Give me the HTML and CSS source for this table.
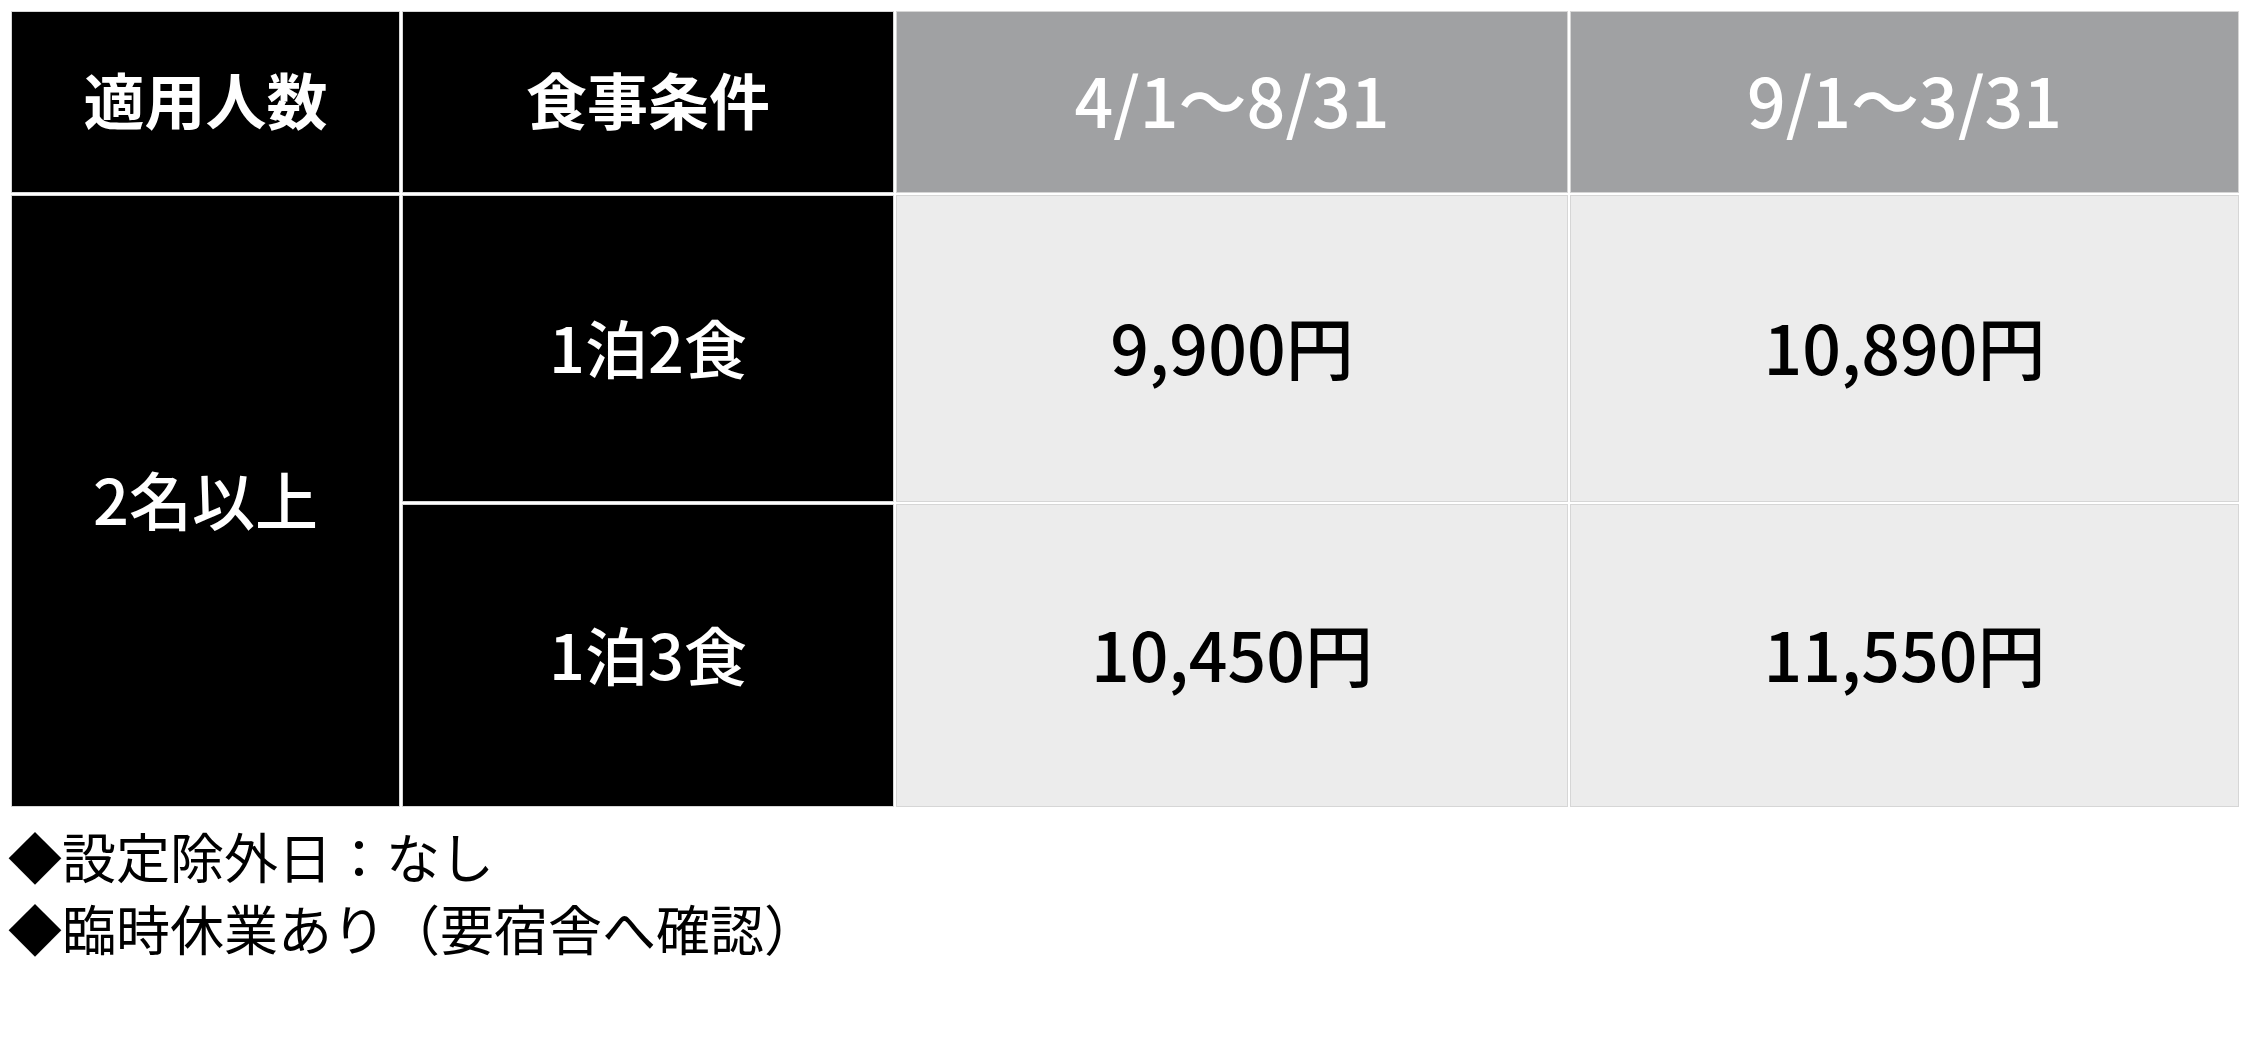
FILE: index.html
```html
<!DOCTYPE html>
<html lang="ja">
<head>
<meta charset="utf-8">
<link rel="stylesheet" href="styles.css">
</head>
<body>
<table class="price-table">
  <colgroup>
    <col class="c1"><col class="c2"><col class="c3"><col class="c4">
  </colgroup>
  <tr class="row-head">
    <th class="h-dark">適用人数</th>
    <th class="h-dark">食事条件</th>
    <th class="h-gray">4/1～8/31</th>
    <th class="h-gray">9/1～3/31</th>
  </tr>
  <tr class="row-a">
    <td class="d-dark" rowspan="2">2名以上</td>
    <td class="d-dark">1泊2食</td>
    <td class="d-light">9,900円</td>
    <td class="d-light">10,890円</td>
  </tr>
  <tr class="row-b">
    <td class="d-dark">1泊3食</td>
    <td class="d-light">10,450円</td>
    <td class="d-light">11,550円</td>
  </tr>
</table>
<div class="notes">
  <p class="note">◆設定除外日：なし</p>
  <p class="note">◆臨時休業あり（要宿舎へ確認）</p>
</div>
</body>
</html>
```
FILE: styles.css
```css
html, body {
  background: #ffffff;
}
body {
  margin: 8px;
  font-family: "Noto Sans CJK JP", "Noto Sans", sans-serif;
  color: #000;
}
.price-table {
  width: 100%;
  border-collapse: separate;
  border-spacing: 4px;
  table-layout: fixed;
}
.c1 { width: 387px; }
.c2 { width: 490px; }
.c3 { width: 670px; }
.c4 { width: 667px; }
.price-table th,
.price-table td {
  padding: 0 0 7px 0;
  text-align: center;
  vertical-align: middle;
  box-shadow: 0 0 0 1px #d6d6d6;
}
.row-head { height: 180px; }
.row-a { height: 305px; }
.row-b { height: 301px; }
.h-dark {
  background: #000;
  color: #fff;
  font-size: 61px;
  font-weight: 700;
}
.h-gray {
  background: #a0a1a3;
  color: #fff;
  font-size: 68px;
  font-weight: 500;
}
.d-dark {
  background: #000;
  color: #fff;
  font-size: 63px;
  font-weight: 500;
}
.d-light {
  background: #ececec;
  color: #000;
  font-size: 68px;
  font-weight: 500;
}
.notes {
  margin-top: 10px;
}
.note {
  margin: 0;
  font-size: 54px;
  line-height: 72px;
  font-weight: 400;
}
```
